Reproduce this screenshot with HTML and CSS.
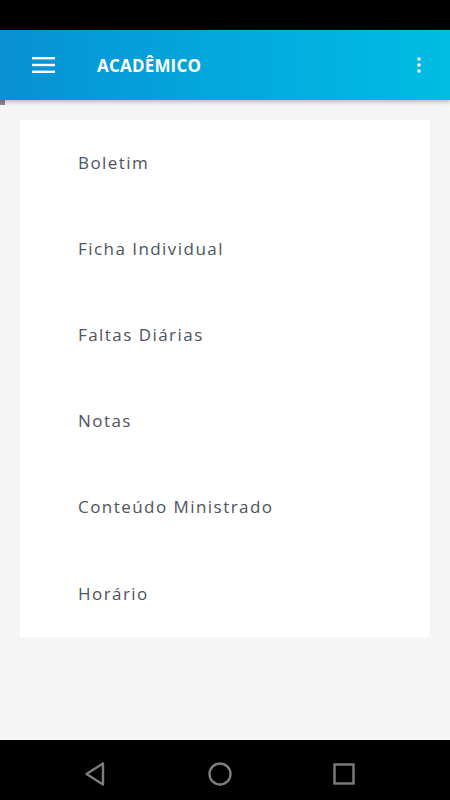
FILE: index.html
```html
<!DOCTYPE html>
<html lang="pt-BR">
<head>
	<meta charset="UTF-8">
	<meta name="viewport" content="width=device-width, initial-scale=1.0">
	<title>Acadêmico</title>
	<link rel="stylesheet" href="styles.css">
</head>
<body>
	<div class="statusbar"></div>

	<header class="appbar">
		<button class="icon-btn menu" aria-label="Menu">
			<svg width="24" height="18" viewBox="0 0 24 18">
				<rect x="0" y="1" width="23" height="2.4" fill="#fff"/>
				<rect x="0" y="7.8" width="23" height="2.4" fill="#fff"/>
				<rect x="0" y="14.6" width="23" height="2.4" fill="#fff"/>
			</svg>
		</button>
		<h1 class="title">ACADÊMICO</h1>
		<button class="icon-btn more" aria-label="Mais">
			<svg width="4" height="16" viewBox="0 0 4 16">
				<circle cx="2" cy="2" r="1.8" fill="#fff"/>
				<circle cx="2" cy="8" r="1.8" fill="#fff"/>
				<circle cx="2" cy="14" r="1.8" fill="#fff"/>
			</svg>
		</button>
	</header>
	<div class="edge-mark"></div>

	<main class="content">
		<ul class="menu-list">
			<li>Boletim</li>
			<li>Ficha Individual</li>
			<li>Faltas Diárias</li>
			<li>Notas</li>
			<li>Conteúdo Ministrado</li>
			<li>Horário</li>
		</ul>
	</main>

	<nav class="navbar">
		<svg width="24" height="26" viewBox="0 0 24 26">
			<path d="M20 2.5 L3.5 13 L20 23.5 Z" fill="none" stroke="#7d7d7d" stroke-width="2.4" stroke-linejoin="round"/>
		</svg>
		<svg width="26" height="26" viewBox="0 0 26 26">
			<circle cx="13" cy="13" r="10.5" fill="none" stroke="#7d7d7d" stroke-width="2.4"/>
		</svg>
		<svg width="24" height="24" viewBox="0 0 24 24">
			<rect x="2.5" y="2.5" width="19" height="19" fill="none" stroke="#7d7d7d" stroke-width="2.4"/>
		</svg>
	</nav>
</body>
</html>
```

FILE: styles.css
```css
* {
	box-sizing: border-box;
}

html,
body {
	margin: 0;
	height: 100%;
	font-family: 'Open Sans', 'Noto Sans', sans-serif;
	background: #f5f5f5;
}

body {
	display: flex;
	flex-direction: column;
	height: 800px;
	position: relative;
}

.statusbar {
	height: 30px;
	background: #000;
	flex: none;
}

.appbar {
	height: 70px;
	flex: none;
	display: flex;
	align-items: center;
	background: linear-gradient(to right, #0890d4 0%, #03a8de 50%, #00bde2 100%);
	box-shadow: 0 2px 4px rgba(0, 0, 0, .25);
	position: relative;
	z-index: 1;
}

.icon-btn {
	background: none;
	border: 0;
	padding: 0;
	display: flex;
	align-items: center;
	justify-content: center;
}

.menu {
	width: 24px;
	margin-left: 32px;
}

.title {
	margin: 0 0 0 41px;
	flex: 1;
	color: #fff;
	font-size: 17px;
	font-weight: 700;
	letter-spacing: .2px;
}

.more {
	width: 4px;
	margin-right: 29px;
}

.edge-mark {
	position: absolute;
	left: 0;
	top: 100px;
	width: 5px;
	height: 5px;
	background: #8a8a8a;
}

.content {
	flex: 1;
	padding: 20px 20px 0;
}

.menu-list {
	list-style: none;
	margin: 0;
	padding: 0;
	background: #fff;
}

.menu-list li {
	height: 86.2px;
	display: flex;
	align-items: center;
	padding: 0 0 2px 58px;
	font-size: 17px;
	letter-spacing: 1.45px;
	color: #4d545c;
}

.navbar {
	height: 60px;
	flex: none;
	background: #000;
	display: flex;
	align-items: center;
	justify-content: space-between;
	padding: 8px 94px 0 83px;
}
```
